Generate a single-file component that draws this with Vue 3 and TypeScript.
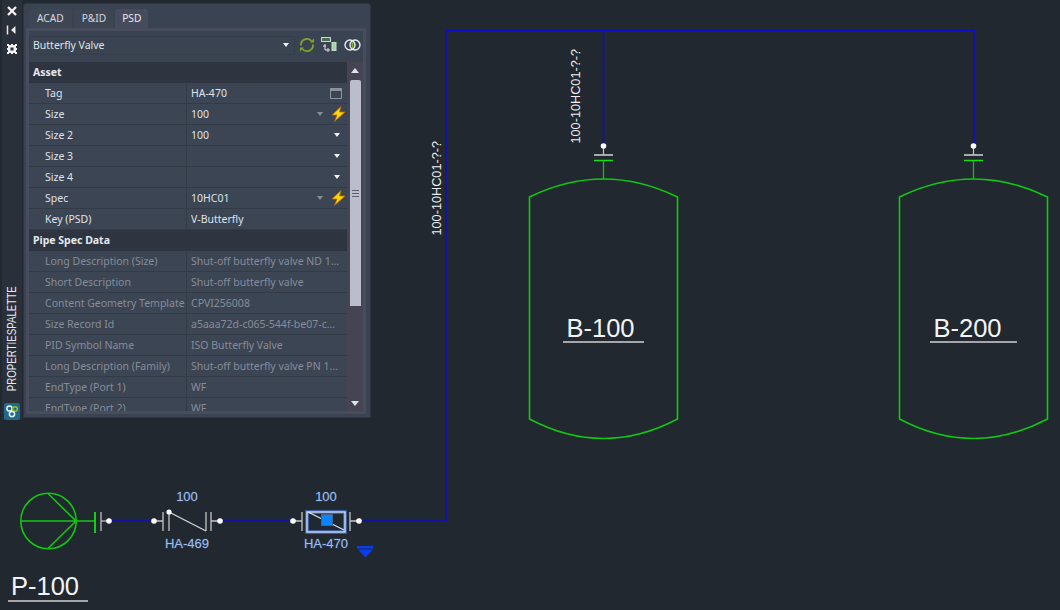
<script setup lang="ts">
interface Row { label?: string; value?: string; header?: boolean; dim?: boolean; arrow?: 'white' | 'grey'; bolt?: boolean; win?: boolean }
const tabs = ['ACAD', 'P&ID', 'PSD']
const rows: Row[] = [
  { label: 'Asset', header: true },
  { label: 'Tag', value: 'HA-470', win: true },
  { label: 'Size', value: '100', arrow: 'grey', bolt: true },
  { label: 'Size 2', value: '100', arrow: 'white' },
  { label: 'Size 3', value: '', arrow: 'white' },
  { label: 'Size 4', value: '', arrow: 'white' },
  { label: 'Spec', value: '10HC01', arrow: 'grey', bolt: true },
  { label: 'Key (PSD)', value: 'V-Butterfly' },
  { label: 'Pipe Spec Data', header: true },
  { label: 'Long Description (Size)', value: 'Shut-off butterfly valve ND 1...', dim: true },
  { label: 'Short Description', value: 'Shut-off butterfly valve', dim: true },
  { label: 'Content Geometry Template', value: 'CPVI256008', dim: true },
  { label: 'Size Record Id', value: 'a5aaa72d-c065-544f-be07-c...', dim: true },
  { label: 'PID Symbol Name', value: 'ISO Butterfly Valve', dim: true },
  { label: 'Long Description (Family)', value: 'Shut-off butterfly valve PN 1...', dim: true },
  { label: 'EndType (Port 1)', value: 'WF', dim: true },
  { label: 'EndType (Port 2)', value: 'WF', dim: true },
]
const vessels = [
  { x: 603.5, tag: 'B-100', tx: 566.5, ux1: 563, ux2: 644 },
  { x: 973.5, tag: 'B-200', tx: 933.5, ux1: 930, ux2: 1017 },
]
const dots = [109, 154, 220, 293, 359]
</script>

<template>
  <div class="screen">
    <svg class="drawing" width="1060" height="610" viewBox="0 0 1060 610">
      <!-- pipe -->
      <path d="M109 521H154M220 521H293M359 521H446V30.500H974V145M603.500 30.500V145" fill="none" stroke="#0c0ccc" stroke-width="1.500" />

      <!-- vessels -->
      <g v-for="v in vessels" :key="v.tag">
        <g :transform="`translate(${v.x - 603.5} 0)`">
          <path d="M603.500 161V179" stroke="#10c010" stroke-width="1.300" fill="none" />
          <path d="M594 160.500H613" stroke="#14e014" stroke-width="1.500" />
          <path d="M594 155H613" stroke="#a8a8a8" stroke-width="2" />
          <path d="M603.500 148V155" stroke="#c8c8c8" stroke-width="1.200" />
          <circle cx="603.500" cy="146" r="2.800" fill="#fff" />
          <path d="M529.500 197Q603.500 161 677.500 197V419Q603.500 458 529.500 419Z" fill="none" stroke="#10c810" stroke-width="1.600" />
        </g>
        <text :x="v.tx" y="337" class="tag">{{ v.tag }}</text>
        <path :d="`M${v.ux1} 342H${v.ux2}`" stroke="#a6a6aa" stroke-width="2" />
      </g>

      <text class="pipe-label" transform="translate(580 143.500) rotate(-90)">100-10HC01-?-?</text>
      <text class="pipe-label" transform="translate(441 235.500) rotate(-90)">100-10HC01-?-?</text>

      <!-- pump -->
      <g fill="none" stroke="#10c810" stroke-width="1.600">
        <circle cx="48.500" cy="521" r="27.700" />
        <path d="M21 521H95M48 493.500L76 521L48 548.500" />
      </g>
      <path d="M95 512V533" stroke="#14e014" stroke-width="1.800" />
      <path d="M101 512V531" stroke="#b4b4b4" stroke-width="1.400" />
      <path d="M101 521H107" stroke="#c8c8c8" stroke-width="1.200" />

      <!-- check valve -->
      <path d="M154 521H163M163 512V531M169 512V531M206 512V531M211 512V531M211 521H220" stroke="#c4c4c4" stroke-width="1.300" fill="none" />
      <path d="M169 512L206 531" stroke="#d8d8d8" stroke-width="1.300" />
      <circle cx="169" cy="512" r="2.600" fill="#fff" />

      <!-- butterfly valve -->
      <path d="M293 521H302M302 512V531M350 512V531M350 521H359" stroke="#c4c4c4" stroke-width="1.300" fill="none" />
      <rect x="307" y="512" width="38" height="20" fill="none" stroke="#4f80e0" stroke-width="3.500" opacity=".8" />
      <rect x="307" y="512" width="38" height="20" fill="none" stroke="#dce6fa" stroke-width="1.200" />
      <path d="M308 512L344 530" stroke="#dce6fa" stroke-width="1.200" />
      <rect x="321.500" y="514.500" width="11" height="11" fill="#0a84ff" stroke="#45608c" />

      <circle v-for="d in dots" :key="d" :cx="d" cy="521" r="2.800" fill="#fff" />

      <text class="sel-label" x="187" y="501" text-anchor="middle">100</text>
      <text class="sel-label" x="187" y="548" text-anchor="middle">HA-469</text>
      <text class="sel-label" x="326" y="501" text-anchor="middle">100</text>
      <text class="sel-label" x="326" y="548" text-anchor="middle">HA-470</text>

      <path d="M357 546H373V548.500H357Z" fill="#0a3cf0" />
      <path d="M358 549.500H373L365.500 557.500Z" fill="#0a3cf0" />

      <text x="11" y="595" class="tag">P-100</text>
      <path d="M8 601H88" stroke="#a6a6aa" stroke-width="2" />
    </svg>

    <aside class="strip">
      <div class="strip-icons">
        <svg width="14" height="14" viewBox="0 0 14 14"><path d="M3 3L11 11M11 3L3 11" stroke="#f2f2f2" stroke-width="2.400" /></svg>
        <svg width="14" height="14" viewBox="0 0 14 14"><path d="M2.500 2.500V11.500" stroke="#e8e8e8" stroke-width="1.500" /><path d="M6 7L10.500 3V11Z" fill="#e8e8e8" /></svg>
        <svg width="14" height="14" viewBox="0 0 14 14"><path d="M2 2H4V3H6V2H8V3H10V2H12V4H11V6H12V8H11V10H12V12H10V11H8V12H6V11H4V12H2V10H3V8H2V6H3V4H2Z" fill="#f0f0f0" /><rect x="5.500" y="5.500" width="3" height="3" fill="#2a3039" /></svg>
      </div>
      <div class="strip-title">PROPERTIESPALETTE</div>
      <div class="strip-logo">
        <svg width="16" height="17" viewBox="0 0 16 17">
          <circle cx="5.500" cy="5.500" r="2.600" fill="none" stroke="#e8f0f0" stroke-width="1.500" />
          <circle cx="11" cy="6" r="2.300" fill="none" stroke="#8fc31f" stroke-width="1.500" />
          <circle cx="8" cy="11" r="2.600" fill="none" stroke="#e8f0f0" stroke-width="1.500" />
        </svg>
      </div>
    </aside>

    <section class="palette">
      <nav class="tabs">
        <span v-for="(t, i) in tabs" :key="t" class="tab" :class="{ active: i === 2 }">{{ t }}</span>
      </nav>
      <div class="frame">
        <div class="toolbar">
          <div class="combo">
            <span>Butterfly Valve</span>
            <i class="arrow white"></i>
          </div>
          <svg class="tool refresh" width="16" height="16" viewBox="0 0 16 16" fill="none">
            <path d="M2 8.500A6 6 0 0 1 12.500 4M14 7.500A6 6 0 0 1 3.500 12" stroke="#7fa52a" stroke-width="1.800" />
            <path d="M11 5.500H15V1.500ZM5 10.500H1V14.500Z" fill="#7fa52a" />
          </svg>
          <svg class="tool chain" width="16" height="16" viewBox="0 0 16 16" fill="none">
            <rect x=".5" y=".5" width="9" height="4" fill="#4d6b57" stroke="#bfe0c4" />
            <rect x="11" y="5.500" width="4" height="8" fill="#a8d0a8" stroke="#bfe0c4" />
            <path d="M4 7V13H9M2 9H5M7 11V15" stroke="#e0e4ea" />
          </svg>
          <svg class="tool rings" width="17" height="12" viewBox="0 0 17 12" fill="none">
            <circle cx="6" cy="6" r="5" stroke="#e8ecf0" stroke-width="1.400" />
            <circle cx="11" cy="6" r="5" stroke="#e8ecf0" stroke-width="1.400" />
            <path d="M8.500 2.500Q10.500 6 8.500 9.500Q6.500 6 8.500 2.500Z" fill="#7fb52a" />
          </svg>
        </div>
        <div class="body">
          <div class="grid">
            <div v-for="r in rows" :key="r.label" class="row" :class="{ header: r.header, dim: r.dim }">
              <template v-if="r.header"><span class="head-label">{{ r.label }}</span></template>
              <template v-else>
                <span class="label">{{ r.label }}</span>
                <span class="value">
                  <span class="value-text">{{ r.value }}</span>
                  <i v-if="r.arrow" class="arrow" :class="r.arrow"></i>
                  <svg v-if="r.bolt" class="bolt" width="15" height="16" viewBox="0 0 15 16">
                    <path d="M10 .5L1 9H6L3.500 15.500L14 6H8.500Z" fill="#ffd800" stroke="#b06a10" stroke-width=".8" />
                  </svg>
                  <svg v-if="r.win" class="win" width="12" height="11" viewBox="0 0 12 11" fill="none">
                    <rect x=".5" y=".5" width="11" height="10" stroke="#8d919a" />
                    <path d="M1 2H11" stroke="#8d919a" stroke-width="2" />
                  </svg>
                </span>
              </template>
            </div>
          </div>
          <div class="scroll">
            <i class="up"></i>
            <div class="thumb"><b></b></div>
            <i class="down"></i>
          </div>
        </div>
      </div>
    </section>
  </div>
</template>

<style>
html, body { margin: 0; background: #212830; }
</style>

<style scoped>
.screen { position: relative; width: 1060px; height: 610px; overflow: hidden; background: #212830; font-family: "Noto Sans", "Liberation Sans", sans-serif; }
.drawing { position: absolute; inset: 0; }
.tag { font: 25.500px "Liberation Sans", sans-serif; fill: #f4f4f4; }
.pipe-label { font: 12.700px "Liberation Sans", sans-serif; fill: #f0f0f0; }
.sel-label { font: 13px "Liberation Sans", sans-serif; fill: #a3bde9; stroke: #34507f; stroke-width: 1px; stroke-opacity: .7; paint-order: stroke; }

.strip { position: absolute; left: 2px; top: 0; width: 20px; height: 420px; background: #2a3039; display: flex; flex-direction: column; align-items: center; }
.strip-icons { display: flex; flex-direction: column; gap: 5px; padding-top: 4px; }
.strip-title { margin-top: auto; margin-bottom: -1px; white-space: nowrap; writing-mode: vertical-rl; transform: rotate(180deg) scaleY(.81); color: #e4e8ee; font: 12px "Liberation Sans", sans-serif; line-height: 14px; }
.strip-logo { width: 16px; height: 17px; background: #23688a; border-radius: 2px; }
.strip-logo svg { display: block; }

.palette { position: absolute; left: 23px; top: 3px; width: 348px; height: 415px; box-sizing: border-box; background: #3a4351; border: 1px solid #2f3640; border-radius: 3px 3px 0 0; padding: 5px 4px 3px 2px; display: flex; flex-direction: column; }
.tabs { display: flex; gap: 2px; padding-left: 3px; height: 19px; flex: none; }
.tab { padding: 0 8px; line-height: 19px; font-size: 10.200px; color: #d3d8e0; background: #3f4653; border-radius: 3px 3px 0 0; }
.tab:nth-child(2) { padding-right: 7px; }
.tab:nth-child(3) { padding: 0 7px; }
.tab.active { background: #464c5d; color: #e4e8ee; }
.frame { flex: 1; min-height: 0; border: 3px solid #474d5d; background: #3a4351; display: flex; flex-direction: column; overflow: hidden; }
.toolbar { height: 31px; flex: none; display: flex; align-items: center; padding-bottom: 3px; box-sizing: border-box; }
.combo { width: 266px; height: 19px; flex: none; box-sizing: border-box; padding: 0 2px 0 3px; display: flex; align-items: center; justify-content: space-between; color: #dfe3ea; font-size: 10.500px; border: 1px solid #353d49; }
.tool { flex: none; }
.refresh { margin-left: 4px; }
.chain { margin-left: 6px; }
.rings { margin-left: 7px; }
.body { flex: 1; min-height: 0; display: flex; overflow: hidden; }
.grid { width: 318px; flex: none; }
.row { height: 21px; box-sizing: border-box; display: flex; align-items: center; font-size: 10.500px; color: #dfe3ea; border-bottom: 1px solid #333b47; background: #3c4554; }
.row.header { background: #2f3540; border-bottom: none; align-items: flex-start; }
.head-label { padding-left: 4px; font-weight: 700; color: #e6e9ee; line-height: 21px; }
.label { width: 158px; flex: none; box-sizing: border-box; height: 100%; padding-left: 16px; line-height: 20px; border-right: 1px solid #333b47; }
.value { flex: 1; display: flex; align-items: center; padding: 0 3px 0 4px; height: 100%; position: relative; }
.value-text { flex: 1; white-space: nowrap; overflow: hidden; }
.row.dim { color: #868c98; }
.arrow { display: block; flex: none; width: 0; height: 0; border: 3px solid transparent; border-bottom: none; border-top-width: 4px; }
.arrow.white { border-top-color: #f2f2f2; margin-right: 4px; }
.combo .arrow.white { margin-right: 3px; }
.arrow.grey { border-top-color: #868c98; margin-right: 8px; }
.bolt { flex: none; margin-right: -2px; }
.win { flex: none; margin-right: 2px; }
.scroll { flex: 1; background: #444453; display: flex; flex-direction: column; align-items: center; position: relative; }
.up, .down { display: block; flex: none; width: 0; height: 0; border: 4px solid transparent; }
.up { border-top: none; border-bottom: 5px solid #dfe2ea; margin-top: 6px; }
.down { border-bottom: none; border-top: 5px solid #dfe2ea; margin-top: 95px; }
.thumb { flex: none; width: 11px; height: 226px; margin-top: 7px; background: #babdcc; border-radius: 2px 2px 0 0; display: flex; align-items: center; justify-content: center; }
.thumb b { display: block; width: 7px; height: 5px; border-top: 1px solid #5c6270; border-bottom: 1px solid #5c6270; position: relative; }
.thumb b::after { content: ""; position: absolute; left: 0; right: 0; top: 2px; height: 1px; background: #5c6270; }
</style>
